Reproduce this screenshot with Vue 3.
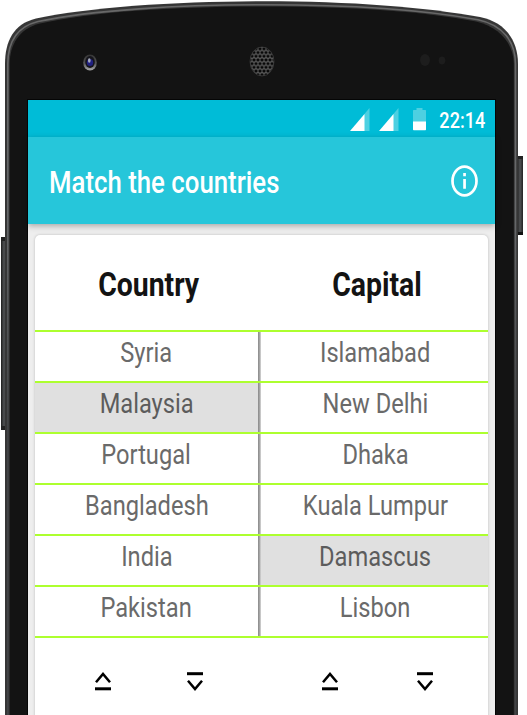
<script setup>
const countries = ['Syria', 'Malaysia', 'Portugal', 'Bangladesh', 'India', 'Pakistan']
const capitals = ['Islamabad', 'New Delhi', 'Dhaka', 'Kuala Lumpur', 'Damascus', 'Lisbon']
const rows = countries.map((country, i) => ({ country, capital: capitals[i] }))
const selectedCountry = 'Malaysia'
const selectedCapital = 'Damascus'
</script>

<template>
  <div class="stage">
    <svg class="phone" viewBox="0 0 527 715" width="527" height="715" aria-hidden="true">
      <defs>
        <pattern id="mesh" x="250" y="47" width="4" height="7.400" patternUnits="userSpaceOnUse">
          <rect width="4" height="7.400" fill="#5e5e5e" />
          <rect x="0.500" y="0.400" width="3" height="2.800" rx="1" fill="#080808" />
          <rect x="-1.500" y="4.100" width="3" height="2.800" rx="1" fill="#080808" />
          <rect x="2.500" y="4.100" width="3" height="2.800" rx="1" fill="#080808" />
        </pattern>
        <linearGradient id="lens" x1="0" y1="0" x2="0" y2="1">
          <stop offset="0" stop-color="#343434" />
          <stop offset="0.55" stop-color="#555" />
          <stop offset="1" stop-color="#aaa" />
        </linearGradient>
        <linearGradient id="key" x1="0" y1="0" x2="1" y2="0">
          <stop offset="0" stop-color="#1d1d1d" />
          <stop offset="0.5" stop-color="#505254" />
          <stop offset="1" stop-color="#222" />
        </linearGradient>
        <linearGradient id="rim" x1="0" y1="0" x2="0" y2="715" gradientUnits="userSpaceOnUse">
          <stop offset="0" stop-color="#686868" />
          <stop offset="0.3" stop-color="#66686a" />
          <stop offset="0.6" stop-color="#424446" />
          <stop offset="1" stop-color="#424446" />
        </linearGradient>
      </defs>
      <rect x="1" y="237" width="6" height="193" fill="url(#key)" />
      <rect x="1" y="237" width="6" height="4" fill="#222" />
      <rect x="1" y="426" width="6" height="4" fill="#222" />
      <rect x="517" y="156" width="6" height="79" fill="url(#key)" />
      <rect x="517" y="156" width="6" height="3" fill="#222" />
      <rect x="517" y="232" width="6" height="3" fill="#111" />
      <path d="M5 720V64C5 42 13 24 36 18.500C90 7 178 1.200 264 1.200C350 1.200 425 7 480 17C505 22 518 40 518 64V720Z" fill="#363636" />
      <path d="M7.800 720V64C7.800 43 16 27 38 21.500C92 10 178 4.800 264 4.800C350 4.800 425 10 478 19.800C503 25 515.500 42 515.500 64V720" fill="none" stroke="url(#rim)" stroke-width="1.600" />
      <path d="M9.700 720V64C9.700 45 19 28.500 40 23.500C93 11.500 178 6.500 264 6.500C350 6.500 425 11.500 476 21.500C501 27.500 513.800 45 513.800 64V720Z" fill="#131313" />
      <ellipse cx="90" cy="62.500" rx="6.800" ry="8" fill="url(#lens)" />
      <ellipse cx="90" cy="62" rx="4.800" ry="6" fill="#15151c" />
      <ellipse cx="90" cy="62.500" rx="3.200" ry="3.600" fill="#202080" />
      <ellipse cx="89.300" cy="60.500" rx="1.300" ry="2.200" fill="#a9adc0" />
      <ellipse cx="262" cy="61.500" rx="12" ry="14.500" fill="url(#mesh)" stroke="#3a3a3a" stroke-width="0.800" />
      <ellipse cx="425" cy="60" rx="5" ry="6" fill="#1d1d1d" />
      <ellipse cx="442" cy="60.500" rx="3.300" ry="4" fill="#1d1d1d" />
    </svg>

    <main class="screen">
      <header class="status">
        <svg class="signal" viewBox="0 0 20 23">
          <path d="M14 6.500L19.500 0V23H14Z" fill="#4dd0e1" />
          <path d="M0 23L14.500 6V23Z" fill="#fff" />
        </svg>
        <svg class="signal second" viewBox="0 0 20 23">
          <path d="M14 6.500L19.500 0V23H14Z" fill="#4dd0e1" />
          <path d="M0 23L14.500 6V23Z" fill="#fff" />
        </svg>
        <svg class="battery" viewBox="0 0 13 23">
          <path d="M0 2.500Q0 2 .7 2H3.500V0H9.500V2H12.300Q13 2 13 2.500V14H0Z" fill="#4dd0e1" />
          <path d="M0 13.500H13V21.500Q13 22.300 12.300 22.300H.7Q0 22.300 0 21.500Z" fill="#fff" />
        </svg>
        <span class="time"><span class="time-text">22:14</span></span>
      </header>

      <div class="appbar">
        <h1 class="title">Match the countries</h1>
        <svg class="info" viewBox="0 0 27 32">
          <ellipse cx="13.500" cy="16" rx="12" ry="14.300" fill="none" stroke="#fff" stroke-width="2.700" />
          <path d="M12.200 8H14.900V11.200H12.200ZM12.200 14H14.900V23.800H12.200Z" fill="#fff" />
        </svg>
      </div>

      <div class="body">
        <section class="card">
          <div class="head">
            <h2 class="heading"><span>Country</span></h2>
            <h2 class="heading capital"><span>Capital</span></h2>
          </div>
          <div class="grid">
            <div v-for="row in rows" :key="row.country" class="row">
              <div class="cell" :class="{ selected: row.country === selectedCountry }"><span>{{ row.country }}</span></div>
              <div class="divider"></div>
              <div class="cell right" :class="{ selected: row.capital === selectedCapital }"><span>{{ row.capital }}</span></div>
            </div>
          </div>
          <div class="controls">
            <template v-for="side in 2" :key="side">
              <svg class="arrow" viewBox="0 0 16 19">
                <path d="M1 10.300L8 2L15 10.300" fill="none" stroke="#000" stroke-width="2.500" />
                <path d="M0 16.800H16" stroke="#000" stroke-width="3" />
              </svg>
              <svg class="arrow" viewBox="0 0 16 19">
                <path d="M0 1.700H16" stroke="#000" stroke-width="3" />
                <path d="M1 8.700L8 17L15 8.700" fill="none" stroke="#000" stroke-width="2.500" />
              </svg>
            </template>
          </div>
        </section>
      </div>
    </main>
  </div>
</template>

<style>
body {
  background: #fff;
  overflow: hidden;
}
</style>

<style scoped>
.stage {
  position: relative;
  box-sizing: border-box;
  width: 527px;
  height: 715px;
  padding: 100px 31px 0 28px;
  overflow: hidden;
  font-family: Roboto, "Liberation Sans", sans-serif;
}
.phone {
  position: absolute;
  inset: 0;
}
.screen {
  position: relative;
  display: flex;
  flex-direction: column;
  width: 467px;
  height: 615px;
  background: #eee;
  box-shadow: 0 0 0 1px #050505;
}
.status {
  display: flex;
  flex: none;
  justify-content: flex-end;
  align-items: flex-start;
  box-sizing: border-box;
  height: 37px;
  padding: 8px 10px 0 0;
  background: #00bcd7;
}
.signal {
  width: 20px;
  height: 23px;
}
.second {
  margin-left: 9px;
}
.battery {
  width: 13px;
  height: 23px;
  margin-left: 14px;
}
.time {
  display: flex;
  justify-content: center;
  width: 46px;
  margin-left: 13px;
  color: #fff;
}
.time-text {
  font-size: 21.500px;
  font-weight: 500;
  line-height: 25px;
  transform: scaleX(0.84);
}
.appbar {
  position: relative;
  display: flex;
  flex: none;
  justify-content: space-between;
  align-items: center;
  box-sizing: border-box;
  height: 87px;
  padding: 0 17.500px 0 21px;
  background: #26c6da;
  box-shadow: 0 2px 6px rgba(0, 0, 0, 0.3);
}
.title {
  margin: 4px 0 0;
  color: #fff;
  font-size: 30.500px;
  font-weight: 500;
  line-height: 36px;
  white-space: nowrap;
  transform: scaleX(0.845);
  transform-origin: left center;
}
.info {
  width: 27px;
  height: 32px;
}
.body {
  flex: none;
  padding: 11px 7px 0;
}
.card {
  height: 490px;
  border-radius: 5px 5px 0 0;
  background: #fff;
  box-shadow: 0 0 3px rgba(0, 0, 0, 0.22);
}
.head {
  display: grid;
  grid-template-columns: 226.500px 226.500px;
  height: 95px;
}
.heading {
  display: flex;
  justify-content: center;
  margin: 0;
  padding: 30px 0 0 1px;
  color: #131313;
  font-size: 33px;
  font-weight: 700;
  line-height: 40px;
}
.capital {
  padding-left: 5px;
}
.heading span {
  transform: scaleX(0.86);
}
.grid {
  border-top: 2px solid #adff2f;
}
.row {
  display: grid;
  grid-template-columns: 223px 3px 1fr;
  height: 49px;
  border-bottom: 2px solid #adff2f;
}
.cell {
  display: flex;
  justify-content: center;
  align-items: center;
  padding-bottom: 8px;
  color: #6a6a6a;
  font-size: 27.500px;
  line-height: 32px;
  white-space: nowrap;
}
.right {
  padding-left: 2px;
}
.cell span {
  transform: scaleX(0.86);
}
.selected {
  background: #e0e0e0;
  color: #5c5c5c;
}
.divider {
  background: linear-gradient(90deg, #888, #aaa 60%, #ddd);
}
.controls {
  display: grid;
  grid-template-columns: 92px 135px 95px 16px;
  padding: 34px 0 0 60px;
}
.arrow {
  width: 16px;
  height: 19px;
}
</style>
